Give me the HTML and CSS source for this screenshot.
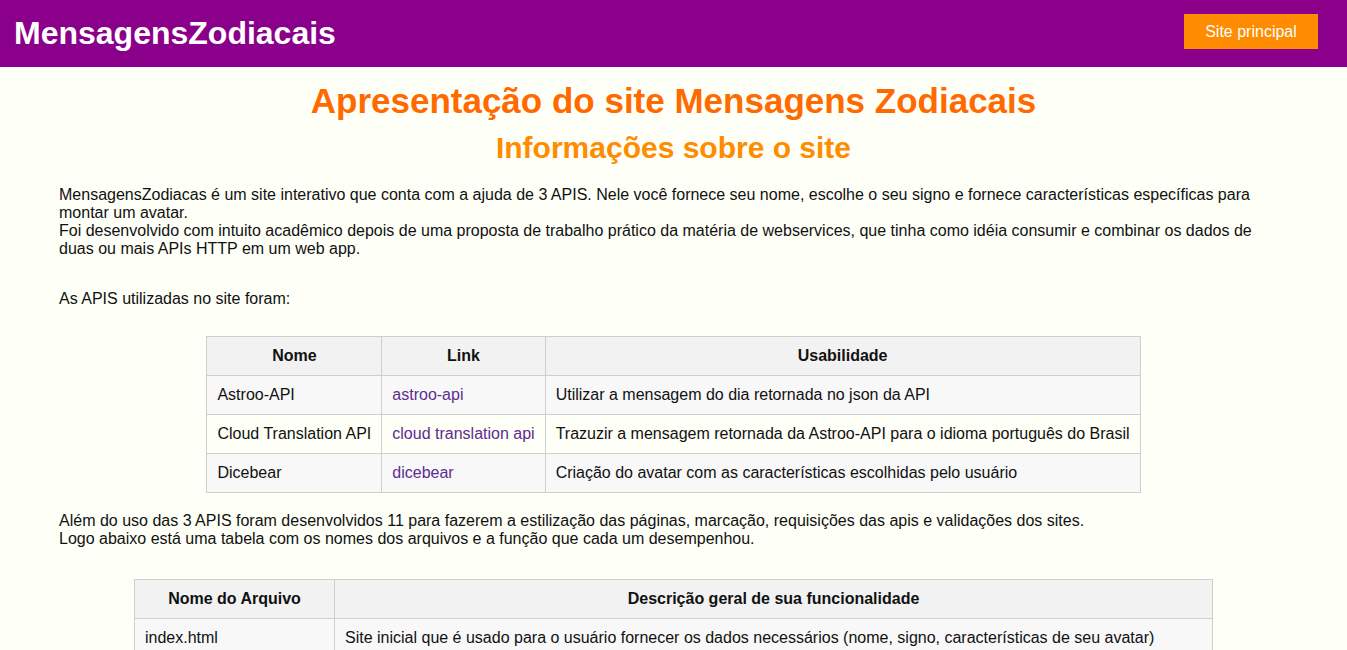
FILE: index.html
```html
<!DOCTYPE html>
<html lang="pt-BR">
<head>
<meta charset="utf-8">
<title>MensagensZodiacais</title>
<link rel="stylesheet" href="styles.css">
</head>
<body>
<header class="topbar">
  <div class="brand">MensagensZodiacais</div>
  <a class="btn" href="#">Site principal</a>
</header>
<main class="content">
  <h1 class="title">Apresentação do site Mensagens Zodiacais</h1>
  <h2 class="subtitle">Informações sobre o site</h2>
  <p class="text intro">MensagensZodiacas é um site interativo que conta com a ajuda de 3 APIS. Nele você fornece seu nome, escolhe o seu signo e fornece características específicas para montar um avatar.<br>Foi desenvolvido com intuito acadêmico depois de uma proposta de trabalho prático da matéria de webservices, que tinha como idéia consumir e combinar os dados de duas ou mais APIs HTTP em um web app.</p>
  <p class="text lead">As APIS utilizadas no site foram:</p>
  <table class="grid apis">
    <thead>
      <tr><th>Nome</th><th>Link</th><th>Usabilidade</th></tr>
    </thead>
    <tbody>
      <tr><td>Astroo-API</td><td><a class="lnk" href="#">astroo-api</a></td><td>Utilizar a mensagem do dia retornada no json da API</td></tr>
      <tr><td>Cloud Translation API</td><td><a class="lnk" href="#">cloud translation api</a></td><td>Trazuzir a mensagem retornada da Astroo-API para o idioma português do Brasil</td></tr>
      <tr><td>Dicebear</td><td><a class="lnk" href="#">dicebear</a></td><td>Criação do avatar com as características escolhidas pelo usuário</td></tr>
    </tbody>
  </table>
  <p class="text after">Além do uso das 3 APIS foram desenvolvidos 11 para fazerem a estilização das páginas, marcação, requisições das apis e validações dos sites.<br>Logo abaixo está uma tabela com os nomes dos arquivos e a função que cada um desempenhou.</p>
  <table class="grid files">
    <thead>
      <tr><th class="c1">Nome do Arquivo</th><th>Descrição geral de sua funcionalidade</th></tr>
    </thead>
    <tbody>
      <tr><td>index.html</td><td>Site inicial que é usado para o usuário fornecer os dados necessários (nome, signo, características de seu avatar)</td></tr>
    </tbody>
  </table>
</main>
</body>
</html>
```
FILE: styles.css
```css
html, body {
  margin: 0;
  padding: 0;
}
body {
  background: #fefff7;
  font-family: "Liberation Sans", Arial, sans-serif;
  color: #111;
}
.topbar {
  background: #8b008b;
  height: 67px;
  display: flex;
  align-items: center;
  justify-content: space-between;
  padding: 0 29px 0 14px;
}
.brand {
  color: #fff;
  font-weight: bold;
  font-size: 32px;
}
.btn {
  background: #ff8c00;
  color: #fff;
  text-decoration: none;
  font-size: 16px;
  width: 134px;
  height: 35px;
  display: flex;
  align-items: center;
  justify-content: center;
  margin-top: -4px;
}
.content {
  padding: 0 59px;
}
.title {
  color: #ff6a00;
  text-align: center;
  font-size: 35px;
  margin: 14px 0 0;
  line-height: 40px;
}
.subtitle {
  color: #ff8c00;
  text-align: center;
  font-size: 30px;
  margin: 9px 0 0;
  line-height: 36px;
}
.text {
  font-size: 16px;
  line-height: 18px;
  margin: 0;
}
.intro {
  margin-top: 20px;
}
.lead {
  margin-top: 32px;
}
.grid {
  border-collapse: collapse;
  margin: 0 auto;
  font-size: 16px;
}
.grid th, .grid td {
  border: 1px solid #cfcfcf;
  padding: 10px 10px;
  line-height: 18px;
}
.grid th {
  background: #f2f2f2;
  font-weight: bold;
  text-align: center;
}
.grid td {
  text-align: left;
}
.grid tbody tr:nth-child(odd) td {
  background: #f8f8f8;
}
.grid tbody tr:nth-child(even) td {
  background: #fefff7;
}
.apis {
  margin-top: 28px;
}
.lnk {
  color: #5d2d91;
  text-decoration: none;
}
.after {
  margin-top: 19px;
}
.files {
  margin-top: 31px;
  width: 1079px;
}
.files .c1 {
  width: 179px;
}
```
